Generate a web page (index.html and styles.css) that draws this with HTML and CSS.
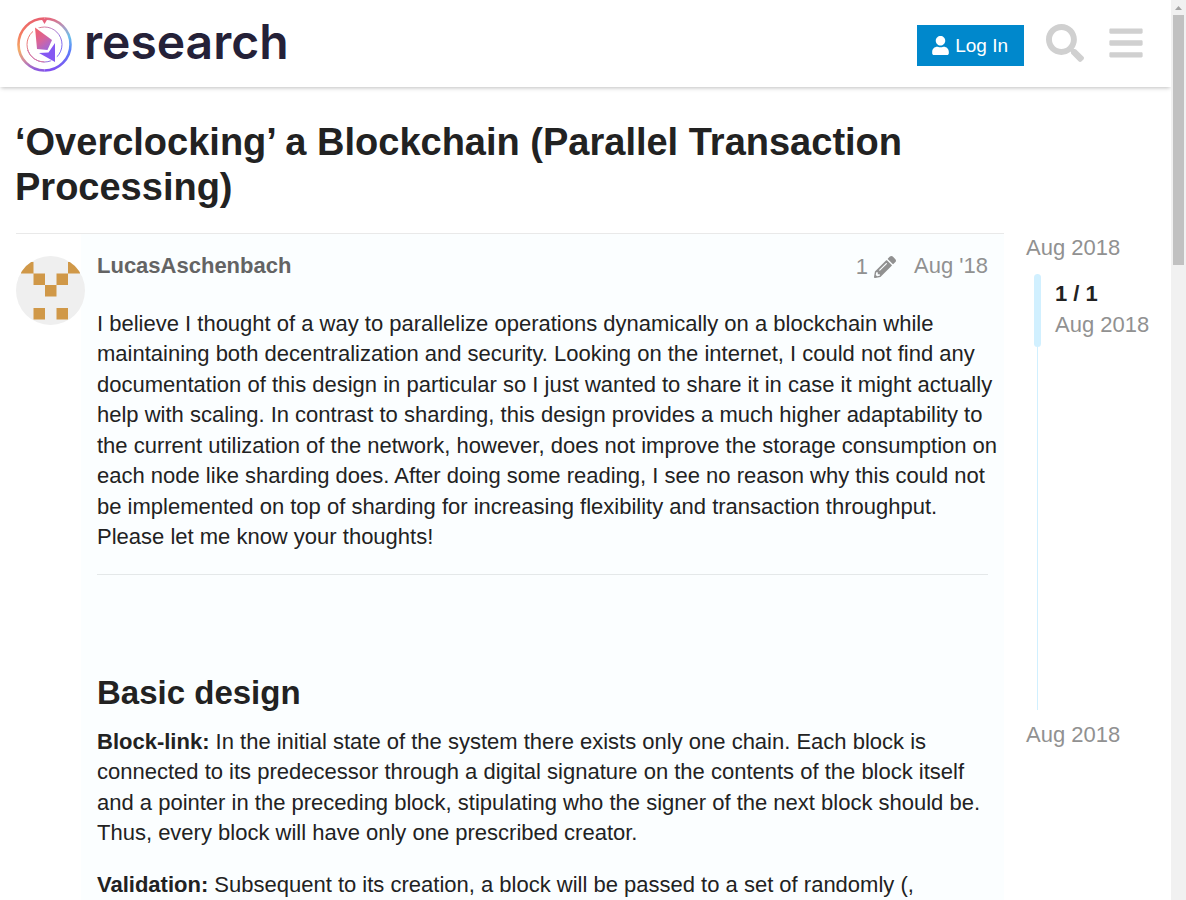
FILE: index.html
```html
<!DOCTYPE html>
<html lang="en">
<head>
<meta charset="utf-8">
<title>‘Overclocking’ a Blockchain (Parallel Transaction Processing)</title>
<link rel="stylesheet" href="styles.css">
</head>
<body>
<div class="viewport">
  <div class="page">
    <header class="site-header">
      <a class="logo" href="#">
        <svg class="logo-mark" viewBox="0 0 56 56" aria-hidden="true">
          <defs>
            <linearGradient id="ring-left" gradientUnits="userSpaceOnUse" x1="0" y1="2" x2="0" y2="54">
              <stop offset="0" stop-color="#e8606e"/>
              <stop offset=".3" stop-color="#f47a60"/>
              <stop offset=".62" stop-color="#f4ad68"/>
              <stop offset=".82" stop-color="#d08aa0"/>
              <stop offset="1" stop-color="#8a58e0"/>
            </linearGradient>
            <linearGradient id="ring-right" gradientUnits="userSpaceOnUse" x1="0" y1="2" x2="0" y2="54">
              <stop offset="0" stop-color="#e86478"/>
              <stop offset=".16" stop-color="#b098c0"/>
              <stop offset=".36" stop-color="#6cc0ea"/>
              <stop offset=".62" stop-color="#5a80fa"/>
              <stop offset="1" stop-color="#8050f0"/>
            </linearGradient>
            <linearGradient id="inner-ring" x1="0" y1=".2" x2="1" y2=".7">
              <stop offset="0" stop-color="#f47a68"/>
              <stop offset=".5" stop-color="#c080c0"/>
              <stop offset="1" stop-color="#7468f8"/>
            </linearGradient>
            <linearGradient id="gem" x1=".2" y1="0" x2=".8" y2="1">
              <stop offset="0" stop-color="#f0606c"/>
              <stop offset=".5" stop-color="#d7659c"/>
              <stop offset="1" stop-color="#9a68dc"/>
            </linearGradient>
          </defs>
          <path d="M28.500 2.500A26 26 0 0 0 28.500 54.500" fill="none" stroke="url(#ring-left)" stroke-width="2.600"/>
          <path d="M28.500 2.500A26 26 0 0 1 28.500 54.500" fill="none" stroke="url(#ring-right)" stroke-width="2.600"/>
          <path d="M25.500 3h6l-3 5z" fill="#e8607a"/>
          <circle cx="28.500" cy="28.500" r="17.500" fill="none" stroke="url(#inner-ring)" stroke-width="1"/>
          <path d="M17 8.500L39 22 41.500 48 17 35z" fill="#fff"/>
          <path d="M11.500 34A17.500 17.500 0 0 0 28.500 46" fill="none" stroke="#d878a8" stroke-width="1"/>
          <path d="M19 11.500L36 24 31.500 34 21 33z" fill="url(#gem)"/>
          <path d="M39 27L39 46 23 37 32.500 36.500z" fill="#8558f2"/>
        </svg>
        <span class="logo-text">research</span>
      </a>
      <nav class="header-actions" aria-label="Site">
        <button class="login" type="button">
          <svg class="icon-user" viewBox="0 0 448 512" aria-hidden="true"><path fill="currentColor" d="M224 256c70.700 0 128-57.300 128-128S294.700 0 224 0 96 57.300 96 128s57.300 128 128 128zm89.600 32h-16.700c-22.200 10.200-46.900 16-72.900 16s-50.600-5.800-72.900-16h-16.700C60.200 288 0 348.200 0 422.400V464c0 26.500 21.500 48 48 48h352c26.500 0 48-21.500 48-48v-41.600c0-74.200-60.200-134.400-134.400-134.400z"/></svg>
          <span class="login-label">Log In</span>
        </button>
        <button class="icon-button" type="button" aria-label="Search">
          <svg class="icon-search" viewBox="0 0 512 512" aria-hidden="true"><path fill="currentColor" d="M505 442.700L405.300 343c-4.500-4.500-10.600-7-17-7H372c27.600-35.300 44-79.700 44-128C416 93.100 322.900 0 208 0S0 93.100 0 208s93.100 208 208 208c48.300 0 92.700-16.400 128-44v16.300c0 6.400 2.500 12.500 7 17l99.700 99.700c9.400 9.400 24.600 9.400 33.900 0l28.300-28.300c9.400-9.400 9.400-24.600.1-34zM208 336c-70.700 0-128-57.200-128-128 0-70.700 57.200-128 128-128 70.700 0 128 57.200 128 128 0 70.700-57.200 128-128 128z"/></svg>
        </button>
        <button class="icon-button" type="button" aria-label="Menu">
          <svg class="icon-menu" viewBox="0 0 448 512" aria-hidden="true"><path fill="currentColor" d="M16 132h416c8.800 0 16-7.200 16-16V76c0-8.800-7.200-16-16-16H16C7.200 60 0 67.200 0 76v40c0 8.800 7.200 16 16 16zm0 160h416c8.800 0 16-7.200 16-16v-40c0-8.800-7.200-16-16-16H16c-8.800 0-16 7.200-16 16v40c0 8.800 7.200 16 16 16zm0 160h416c8.800 0 16-7.200 16-16v-40c0-8.800-7.200-16-16-16H16c-8.800 0-16 7.200-16 16v40c0 8.800 7.200 16 16 16z"/></svg>
        </button>
      </nav>
    </header>
    <main class="topic">
      <h1 class="topic-title">‘Overclocking’ a Blockchain (Parallel Transaction Processing)</h1>
      <div class="topic-columns">
        <article class="post">
          <svg class="avatar" viewBox="0 0 69 69" role="img" aria-label="LucasAschenbach">
            <defs><clipPath id="avatar-clip"><circle cx="34.500" cy="34.500" r="34.500"/></clipPath></defs>
            <g clip-path="url(#avatar-clip)">
              <path fill="#efefef" d="M0 0h69v69H0z"/>
              <path fill="#d09848" d="M5 6h12.500v11.500H5zM52 6h12v11.500H52zM17.500 17.500H29V29H17.500zM40.500 17.500H52V29H40.500zM29 29h11.500v11.500H29zM17.500 52H29v11.500H17.500zM40.500 52H52v11.500H40.500z"/>
            </g>
          </svg>
          <div class="post-body">
            <div class="post-meta">
              <a class="author" href="#">LucasAschenbach</a>
              <button class="edits" type="button" aria-label="1 edit">
                <span>1</span>
                <svg class="icon-pencil" viewBox="0 0 512 512" aria-hidden="true"><path fill="currentColor" d="M497.900 142.100l-46.100 46.100c-4.700 4.700-12.300 4.700-17 0l-111-111c-4.700-4.700-4.700-12.300 0-17l46.100-46.100c18.700-18.700 49.100-18.700 67.900 0l60.100 60.100c18.800 18.700 18.800 49.100 0 67.900zM284.200 99.800L21.600 362.400.4 483.900c-2.900 16.400 11.400 30.600 27.800 27.800l121.500-21.300 262.600-262.600c4.700-4.700 4.700-12.300 0-17l-111-111c-4.800-4.700-12.400-4.700-17.100 0zM124.100 339.900c-5.500-5.500-5.500-14.300 0-19.800l154-154c5.500-5.500 14.300-5.500 19.800 0s5.500 14.300 0 19.800l-154 154c-5.500 5.500-14.300 5.500-19.800 0zM88 424h48v36.300l-64.500 11.300-31.100-31.100L51.700 376H88v48z"/></svg>
              </button>
              <a class="post-date" href="#">Aug '18</a>
            </div>
            <div class="cooked">
              <p>I believe I thought of a way to parallelize operations dynamically on a blockchain while maintaining both decentralization and security. Looking on the internet, I could not find any documentation of this design in particular so I just wanted to share it in case it might actually help with scaling. In contrast to sharding, this design provides a much higher adaptability to the current utilization of the network, however, does not improve the storage consumption on each node like sharding does. After doing some reading, I see no reason why this could not be implemented on top of sharding for increasing flexibility and transaction throughput. Please let me know your thoughts!</p>
              <hr>
              <h2>Basic design</h2>
              <p><strong>Block-link:</strong> In the initial state of the system there exists only one chain. Each block is connected to its predecessor through a digital signature on the contents of the block itself and a pointer in the preceding block, stipulating who the signer of the next block should be. Thus, every block will have only one prescribed creator.</p>
              <p><strong>Validation:</strong> Subsequent to its creation, a block will be passed to a set of randomly (,</p>
            </div>
          </div>
        </article>
        <aside class="timeline" aria-label="Topic timeline">
          <a href="#">Aug 2018</a>
          <div class="track">
            <div class="rail"><div class="handle"></div></div>
            <div class="position"><strong>1 / 1</strong><span>Aug 2018</span></div>
          </div>
          <a href="#">Aug 2018</a>
        </aside>
      </div>
    </main>
  </div>
  <div class="scrollbar" aria-hidden="true">
    <svg class="scroll-arrow" viewBox="0 0 15 15"><path fill="#a3a3a3" d="M4 10l3.500-4 3.500 4z"/></svg>
    <div class="thumb"></div>
  </div>
</div>
</body>
</html>
```
FILE: styles.css
```css
* { box-sizing: border-box; }
body {
  margin: 0;
  color: #222;
  background: #fff;
  font-family: "Liberation Sans", Arial, sans-serif;
  font-size: 22px;
  line-height: 1.386;
}
a { color: inherit; text-decoration: none; }
button { border: 0; background: none; padding: 0; font: inherit; color: inherit; cursor: pointer; }
svg { display: block; flex: none; }

.viewport { display: flex; height: 100vh; overflow: hidden; }
.page { flex: 1; min-width: 0; overflow: hidden; }

.site-header {
  display: flex;
  align-items: center;
  justify-content: space-between;
  height: 87px;
  padding: 0 28px 0 16px;
  box-shadow: 0 2px 4px -1px rgba(0, 0, 0, .25);
}
.logo { display: flex; align-items: center; gap: 12px; }
.logo-mark { width: 56px; height: 56px; }
.logo-text {
  padding-bottom: 4px;
  color: #252138;
  font: 600 48px/56px Inter, sans-serif;
}
.header-actions { display: flex; align-items: center; }
.login {
  display: flex;
  align-items: center;
  gap: 6px;
  height: 41px;
  margin: 4px 22px 0 0;
  padding: 0 16px 0 15px;
  background: #0088cc;
  color: #fff;
  font-size: 19px;
}
.login-label { padding-top: 2px; }
.icon-user { width: 17px; height: 19px; }
.icon-button { margin-bottom: 1px; color: #d0d0d0; }
.icon-search { width: 38px; height: 38px; margin-right: 25px; }
.icon-menu { width: 34px; height: 38px; }

.topic { padding: 33px 16px 0; }
.topic-title {
  max-width: 1110px;
  margin: 0 0 23px -1px;
  font-size: 38px;
  line-height: 45px;
}
.topic-columns { display: flex; align-items: flex-start; }
.post {
  display: flex;
  flex: 1;
  min-width: 0;
  border-top: 1px solid #e9e9e9;
}
.avatar { width: 69px; height: 69px; margin: 22px -4px 0 0; z-index: 1; }
.post-body { flex: 1; min-width: 0; padding: 16px 4px 16px 16px; background: #fbfeff; }
.post-meta {
  display: flex;
  align-items: center;
  height: 32px;
  margin-right: 12px;
  color: #919191;
}
.author { margin-right: auto; color: #646464; font-weight: bold; }
.edits { display: flex; align-items: center; gap: 6px; margin-right: 18px; padding-top: 2px; }
.icon-pencil { width: 22px; height: 22px; }
.cooked p { margin: 0 0 21px; }
.cooked p:first-child { margin-top: 27px; }
.cooked hr { height: 1px; margin: 21px 12px 95px 0; border: 0; background: #e4e8e9; }
.cooked h2 { margin: 0 0 11px; font-size: 33px; line-height: 46px; }

.timeline { width: 151px; padding-left: 22px; color: #919191; }
.timeline > a { display: block; }
.track { display: flex; height: 436px; margin: 11px 0 10px; padding-left: 8px; }
.rail {
  width: 7px;
  background: linear-gradient(#d1f0ff, #d1f0ff) center / 1px 100% no-repeat;
}
.handle { height: 73px; border-radius: 4px; background: #d1f0ff; }
.position { display: flex; flex-direction: column; margin: 5px 0 0 14px; white-space: nowrap; }
.position strong { color: #222; }

.scrollbar { width: 15px; background: #f1f1f1; }
.scroll-arrow { width: 15px; height: 15px; }
.thumb { height: 250px; margin: 0 2px; background: #c1c1c1; }
```
